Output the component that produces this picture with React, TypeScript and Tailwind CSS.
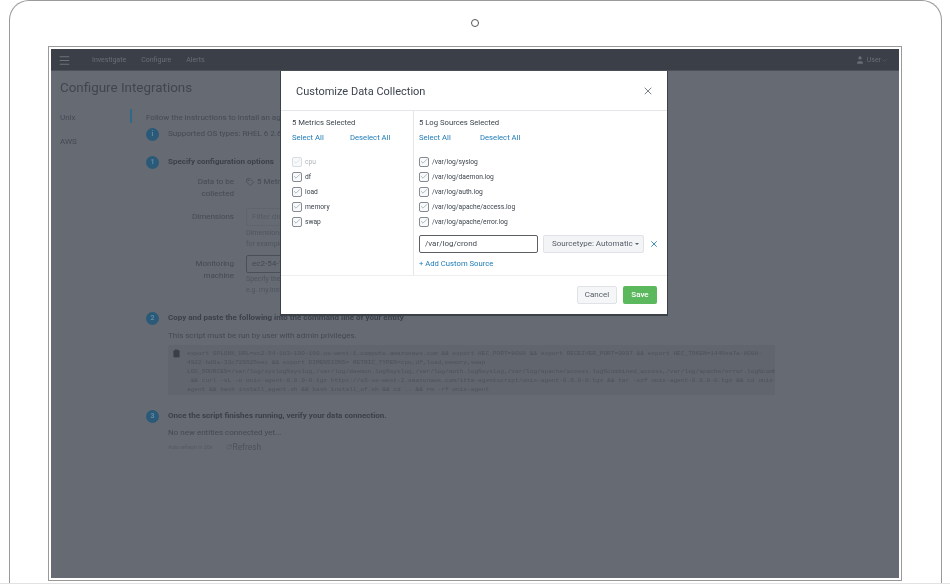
import { Check, X, ChevronDown, RotateCw, Tag, Clipboard, User, Menu } from "lucide-react"

const metrics = ["df", "load", "memory", "swap"]
const logs = [
  "/var/log/syslog",
  "/var/log/daemon.log",
  "/var/log/auth.log",
  "/var/log/apache/access.log",
  "/var/log/apache/error.log",
]

const script = [
  "export SPLUNK_URL=ec2-54-183-190-160.us-west-1.compute.amazonaws.com && export HEC_PORT=8088 && export RECEIVER_PORT=9997 && export HEC_TOKEN=1446ea7a-8088-",
  "4922-bd9a-33c729525eec && export DIMENSIONS= METRIC_TYPES=cpu,df,load,memory,swap",
  "LOG_SOURCES=/var/log/syslog%syslog,/var/log/daemon.log%syslog,/var/log/auth.log%syslog,/var/log/apache/access.log%combined_access,/var/log/apache/error.log%combi",
  " && curl -sL -o unix-agent-0.9.0-0.tgz https://s3-us-west-2.amazonaws.com/ittm-agentscript/unix-agent-0.9.0-0.tgz && tar -xzf unix-agent-0.9.0-0.tgz && cd unix-",
  "agent && bash install_agent.sh && bash install_uf.sh && cd .. && rm -rf unix-agent",
]

function Checkbox({ label, disabled }: { label: string; disabled?: boolean }) {
  return (
    <div className="flex items-center h-[15px]">
      <span
        className={
          "w-[10px] h-[10px] rounded-[2px] border flex items-center justify-center " +
          (disabled ? "border-[#d8dbe0] bg-[#f8f9fa]" : "border-[#858a93] bg-[#f8f9fa]")
        }
      >
        <Check size={9} strokeWidth={1.1} className={disabled ? "text-[#b5b9bf]" : "text-[#3c444d]"} />
      </span>
      <span className={"ml-[3px] pt-[1px] text-[6.7px] " + (disabled ? "text-[#b0b4ba]" : "text-[#3c444d]")}>{label}</span>
    </div>
  )
}

function StepBadge({ children }: { children: React.ReactNode }) {
  return (
    <span className="w-[13px] h-[13px] rounded-full bg-[#2a5a78] text-[#5f8aa5] text-[7px] font-bold flex items-center justify-center shrink-0">
      {children}
    </span>
  )
}

function CustomizeModal() {
  return (
    <div className="absolute left-[229px] top-[22px] w-[388px] h-[245px] bg-white border-l border-b-2 border-r border-[#3c4047] flex flex-col text-[#3c444d]">
      <div className="h-[40px] shrink-0 pt-[1px] flex items-center justify-between pl-[15px] pr-[13px] border-b border-[#e4e6ea]">
        <h2 className="text-[11px] leading-none">Customize Data Collection</h2>
        <X size={12} strokeWidth={1.4} className="text-[#444b55]" />
      </div>
      <div className="h-[165px] shrink-0 flex border-b border-[#eceef0]">
        <div className="w-[133px] border-r border-[#e4e6ea] pl-[11px] pt-[7px]">
          <p className="text-[7.7px] leading-[10px]">5 Metrics Selected</p>
          <div className="flex mt-[5px] text-[7.7px] leading-[10px] text-[#1d7ab5]">
            <span className="w-[58px]">Select All</span>
            <span>Deselect All</span>
          </div>
          <div className="mt-[11px]">
            <Checkbox label="cpu" disabled />
            {metrics.map((m) => (
              <Checkbox key={m} label={m} />
            ))}
          </div>
        </div>
        <div className="flex-1 pl-[5px] pt-[7px]">
          <p className="text-[7.7px] leading-[10px]">5 Log Sources Selected</p>
          <div className="flex mt-[5px] text-[7.7px] leading-[10px] text-[#1d7ab5]">
            <span className="w-[61px]">Select All</span>
            <span>Deselect All</span>
          </div>
          <div className="mt-[11px]">
            {logs.map((l) => (
              <Checkbox key={l} label={l} />
            ))}
          </div>
          <div className="flex items-center mt-[6px]">
            <div className="w-[119px] h-[18px] border border-[#5c6066] rounded-[2px] pl-[5px] flex items-center text-[8px] text-[#444b55]">
              /var/log/crond
            </div>
            <div className="ml-[5px] w-[101px] h-[18px] bg-[#f3f4f6] border border-[#e0e2e6] rounded-[2px] pl-[8px] flex items-center text-[8px] text-[#555c66]">
              Sourcetype: Automatic
              <span className="ml-[2px] w-0 h-0 border-x-[2px] border-t-[2px] border-x-transparent border-t-[#555c66]" />
            </div>
            <X size={10} strokeWidth={2} className="ml-[5px] text-[#1d7ab5]" />
          </div>
          <p className="mt-[6px] text-[7.7px] leading-[10px] text-[#1d7ab5]">+ Add Custom Source</p>
        </div>
      </div>
      <div className="flex-1 flex items-start justify-end pt-[10px] pr-[10px] gap-[6px]">
        <button className="w-[40px] h-[18px] bg-[#f5f6f8] border border-[#e0e2e6] rounded-[2px] text-[8px] text-[#555c66]">
          Cancel
        </button>
        <button className="w-[34px] h-[18px] bg-[#5cb85c] rounded-[2px] text-[8px] font-medium text-white">Save</button>
      </div>
    </div>
  )
}

export default function App() {
  return (
    <div
      className="w-[950px] h-[584px] bg-white overflow-hidden border-b border-[#e2e2e2] antialiased"
      style={{ fontFamily: "Roboto, sans-serif" }}
    >
      <div className="ml-[9px] w-[933px] h-[583px] border-x border-t border-[#9a9a9a] rounded-t-[20px] pt-[45px] pl-[38px] relative">
        <span className="absolute left-[461px] top-[18px] w-[8px] h-[8px] rounded-full border border-[#555]" />

        {/* screen */}
        <div className="w-[854px] h-[535px] border border-[#9a9a9a] p-[2px]">
          <div className="relative w-full h-full bg-[#656a73] overflow-hidden text-[#454a53] blur-[0.4px]">
            <div className="h-[22px] pt-[1px] bg-[#3b3f47] border-b border-[#4b4f57] flex items-center text-[7px] text-[#6a6e76]">
              <Menu size={13} strokeWidth={1.9} className="ml-[7px] text-[#6e727a]" />
              <span className="ml-[21px]">Investigate</span>
              <span className="ml-[15px]">Configure</span>
              <span className="ml-[15px]">Alerts</span>
              <span className="ml-auto mr-[11px] flex items-center">
                <User size={10} fill="#6a6e76" strokeWidth={0} className="mr-[2px]" />
                User
                <ChevronDown size={7} strokeWidth={1.5} />
              </span>
            </div>

            <h1 className="ml-[9px] mt-[7px] text-[13.4px] leading-[20px] text-[#41464e]">Configure Integrations</h1>

            <div className="flex mt-[11px]">
              <div className="w-[81px] shrink-0 pl-[9px] pt-[4px] text-[8px] relative">
                <p className="leading-[10px]">Unix</p>
                <p className="leading-[10px] mt-[14px]">AWS</p>
                <span className="absolute right-0 top-0 w-[2px] h-[14px] bg-[#31688a]" />
              </div>

              <div className="ml-[14px] flex-1 text-[8px]">
                <p className="leading-[10px] pt-[4px]">Follow the instructions to install an agent</p>
                <div className="flex items-center mt-[3px] h-[16px]">
                  <StepBadge>i</StepBadge>
                  <span className="ml-[9px]">Supported OS types: RHEL 6 2.6</span>
                </div>
                <div className="flex items-center mt-[12px] h-[16px]">
                  <StepBadge>1</StepBadge>
                  <span className="ml-[9px] font-bold text-[#3c4149]">Specify configuration options</span>
                </div>

                <div className="flex mt-[6px]">
                  <div className="w-[88px] text-right leading-[12px]">
                    Data to be
                    <br />
                    collected
                  </div>
                  <div className="ml-[12px] flex items-start leading-[12px]">
                    <Tag size={8} className="mt-[2px] mr-[3px]" /> 5 Metrics
                  </div>
                </div>
                <div className="flex mt-[8px]">
                  <div className="w-[88px] text-right leading-[18px]">Dimensions</div>
                  <div className="ml-[12px]">
                    <div className="w-[120px] h-[18px] border border-[#5f646d] rounded-[2px] pl-[5px] leading-[16px] text-[#555a63]">
                      Filter dimensions
                    </div>
                    <p className="mt-[2px] text-[7px] leading-[11px] text-[#50555e]">
                      Dimensions
                      <br />
                      for example
                    </p>
                  </div>
                </div>
                <div className="flex mt-[5px]">
                  <div className="w-[88px] text-right leading-[12px] pt-[3px]">
                    Monitoring
                    <br />
                    machine
                  </div>
                  <div className="ml-[12px]">
                    <div className="w-[120px] h-[18px] border border-[#4a4f58] rounded-[2px] pl-[5px] leading-[16px]">
                      ec2-54-183-190-160
                    </div>
                    <p className="mt-[1px] text-[7px] leading-[11px] text-[#50555e]">
                      Specify the
                      <br />
                      e.g. my.instance
                    </p>
                  </div>
                </div>

                <div className="flex items-center mt-[14px] h-[16px]">
                  <StepBadge>2</StepBadge>
                  <span className="ml-[9px] font-bold text-[#3c4149]">Copy and paste the following into the command line of your entity</span>
                </div>
                <p className="ml-[22px] mt-[4px] leading-[12px]">This script must be run by user with admin privileges.</p>

                <div className="ml-[22px] mt-[3px] w-[607px] h-[50px] bg-[#60656e] rounded-[2px] flex pl-[4px] pt-[4px] overflow-hidden">
                  <Clipboard size={9} fill="#3a3f47" strokeWidth={1} className="shrink-0" />
                  <pre
                    className="ml-[6px] text-[6.15px] leading-[9px] text-[#4d525b]"
                    style={{ fontFamily: "'Liberation Mono', monospace" }}
                  >
                    {script.join("\n")}
                  </pre>
                </div>

                <div className="flex items-center mt-[13px] h-[16px]">
                  <StepBadge>3</StepBadge>
                  <span className="ml-[9px] font-bold text-[#3c4149]">Once the script finishes running, verify your data connection.</span>
                </div>
                <p className="ml-[22px] mt-[3px] leading-[12px]">No new entities connected yet...</p>
                <div className="ml-[22px] mt-[3px] flex items-center leading-[10px]">
                  <span className="text-[5.3px] text-[#555a63]">Auto refresh in 30s</span>
                  <RotateCw size={6} strokeWidth={1.2} className="ml-[13px] mr-[1px]" />
                  <span className="text-[8.4px] text-[#4d525b]">Refresh</span>
                </div>
              </div>
            </div>

            <CustomizeModal />
          </div>
        </div>
      </div>
    </div>
  )
}
